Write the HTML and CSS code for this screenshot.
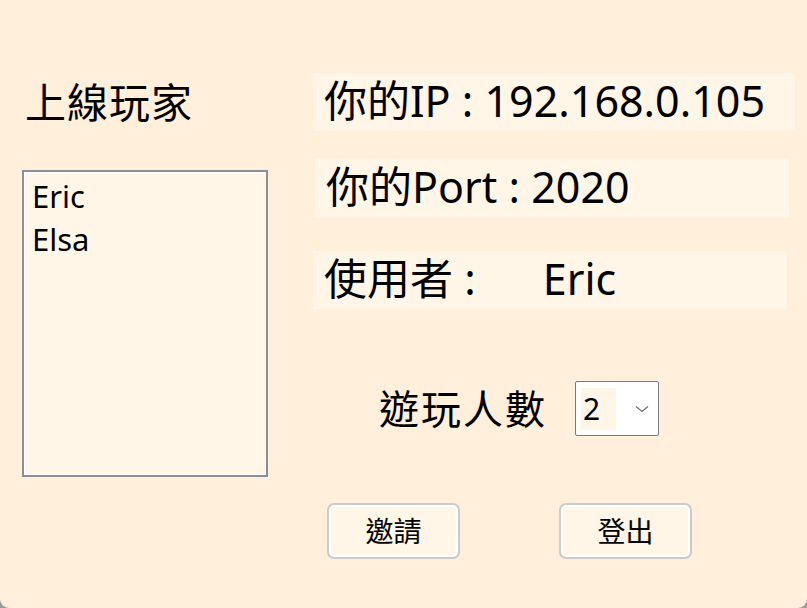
FILE: index.html
```html
<!DOCTYPE html>
<html lang="zh-Hant">
<head>
<meta charset="utf-8">
<title>上線玩家</title>
<link rel="stylesheet" href="styles.css">
</head>
<body>
<div class="window">
  <div class="left">
    <div class="title">上線玩家</div>
    <div class="listbox">
      <div class="item">Eric</div>
      <div class="item">Elsa</div>
    </div>
  </div>
  <div class="right">
    <div class="label lbl-ip">你的IP : 192.168.0.105</div>
    <div class="label lbl-port">你的Port : 2020</div>
    <div class="label lbl-user">使用者 :      Eric</div>
    <div class="count-row">
      <span class="count-label">遊玩人數</span>
      <div class="select">
        <span class="select-value">2</span>
        <svg class="chevron" width="14" height="8" viewBox="0 0 14 8"><path d="M1 1.5 L7 6.5 L13 1.5" fill="none" stroke="#6d6d6d" stroke-width="1.2"/></svg>
      </div>
    </div>
    <div class="buttons">
      <div class="btn">邀請</div>
      <div class="btn">登出</div>
    </div>
  </div>
</div>
</body>
</html>
```

FILE: styles.css
```css
html, body {
  margin: 0;
  padding: 0;
  background: #9a9a9a;
}
body {
  width: 807px;
  height: 608px;
  overflow: hidden;
  font-family: "Noto Sans", "Noto Sans CJK TC", sans-serif;
  color: #000;
}
.window {
  width: 807px;
  height: 608px;
  background: #ffefdb;
  border-radius: 0 0 9px 9px;
  display: flex;
  box-sizing: border-box;
}
.left {
  margin-left: 22px;
  width: 246px;
  display: flex;
  flex-direction: column;
}
.title {
  margin-top: 76px;
  margin-left: 3px;
  font-size: 41px;
  line-height: 52px;
  letter-spacing: 1px;
}
.listbox {
  margin-top: 42px;
  width: 246px;
  height: 307px;
  box-sizing: border-box;
  border: 2px solid #8b8f95;
  box-shadow: inset 0 0 0 1px #ffffff;
  background: #fff6e8;
  padding: 3px 0 0 8px;
}
.item {
  font-size: 31px;
  line-height: 43px;
}
.right {
  margin-left: 45px;
  display: flex;
  flex-direction: column;
}
.label {
  height: 58px;
  box-sizing: border-box;
  background: #fff6e8;
  font-size: 43px;
  line-height: 56px;
  padding-left: 11px;
  white-space: pre;
}
.lbl-ip {
  margin-top: 73px;
  width: 482px;
}
.lbl-port {
  margin-top: 28px;
  margin-left: 2px;
  width: 474px;
}
.lbl-user {
  margin-top: 34px;
  width: 474px;
}
.count-row {
  margin-top: 72px;
  margin-left: 66px;
  display: flex;
  align-items: center;
  gap: 28px;
}
.count-label {
  font-size: 40px;
  line-height: 55px;
  letter-spacing: 2px;
}
.select {
  width: 84px;
  height: 55px;
  box-sizing: border-box;
  border: 1.5px solid #7a7a7a;
  border-radius: 2px;
  background: #ffffff;
  display: flex;
  align-items: center;
  padding: 0 9px 0 5px;
}
.select-value {
  width: 35px;
  height: 42px;
  background: #fff6e8;
  font-size: 30px;
  line-height: 42px;
  padding-left: 2px;
  box-sizing: border-box;
}
.chevron {
  margin-left: auto;
}
.buttons {
  margin-top: 67px;
  margin-left: 14px;
  display: flex;
  gap: 99px;
}
.btn {
  width: 133px;
  height: 56px;
  box-sizing: border-box;
  border: 2px solid #cbcbcb;
  border-radius: 7px;
  box-shadow: inset 0 0 0 2px #ffffff;
  background: #fff6e8;
  font-size: 28px;
  line-height: 52px;
  text-align: center;
}
```
